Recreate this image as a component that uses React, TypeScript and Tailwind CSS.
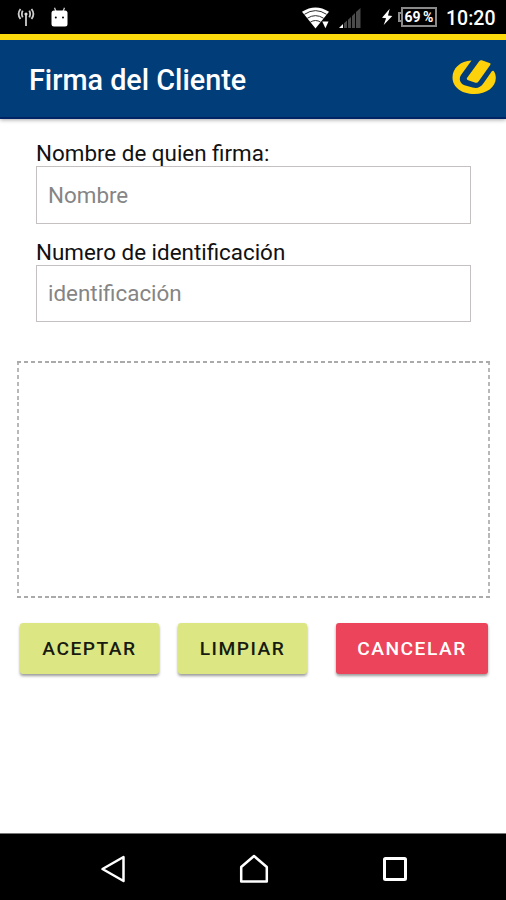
import type { ReactNode } from 'react';

function StatusBar() {
  return (
    <div className="flex h-[34px] shrink-0 items-center justify-between bg-black pl-[17px] pr-[11px] text-white">
      <div className="flex items-center gap-[16px] pb-px">
        <svg width="18" height="20" viewBox="0 0 18 20" fill="none" stroke="#ccc" strokeWidth="1.8">
          <path d="M9 8v11" />
          <circle cx="9" cy="7" r="1.6" fill="#ddd" stroke="none" />
          <path d="M5.7 3.7Q4 7 5.7 10.3M3.5 2Q-.3 7 3.5 12M12.3 3.7Q14 7 12.3 10.3M14.5 2Q18.3 7 14.5 12" />
        </svg>
        <svg width="17" height="20" viewBox="0 0 17 20">
          <path d="M3.5.8 5 4.5M13.5.8 12 4.5" stroke="#ccc" strokeWidth="1.3" />
          <rect x=".5" y="3.5" width="16" height="16" rx="2.5" fill="#fff" />
          <circle cx="4.8" cy="10.5" r="1" />
          <circle cx="12" cy="10.5" r="1" />
        </svg>
      </div>
      <div className="flex items-center">
        <svg width="27" height="24" viewBox="0 0 28 24" className="mt-[2px]">
          <path d="M0 5.5Q14-3.5 28 5.5L14 23Z" fill="#fff" />
          <path d="M2.5 8.2Q14 .5 25.5 8.2M5.5 12.3Q14 6.8 22.5 12.3M8.5 16.4Q14 12.8 19.5 16.4" fill="none" stroke="#222" strokeWidth="1" />
          <path d="M21 15.5h6.5L24.3 22.5Z" fill="#fff" />
        </svg>
        <svg width="22" height="21" viewBox="0 0 22 21" className="ml-[10px] mt-[3px]">
          <path d="M0 20 4 16v4Z" fill="#fff" />
          <path d="M5 15.3 8 12.6V20H5ZM9 11.7l3-2.8V20H9ZM13 8l3-2.9V20h-3ZM17 4.1 21.5 0v20H17Z" fill="#4b4b4b" />
        </svg>
        <svg width="12" height="18" viewBox="0 0 12 18" className="ml-[20px]">
          <path d="M8.7.8 1 9.8l4.1.4L2.7 17 11.3 8 7 7.4Z" fill="#fff" />
        </svg>
        <div className="ml-[5px] h-[10px] w-[3px] border-2 border-r-0 border-[#8a8a8a]" />
        <div className="flex h-[20px] w-[36px] items-center justify-center border-2 border-[#8a8a8a] text-[14px] font-bold leading-none [word-spacing:-1px]">69 %</div>
        <span className="ml-[9px] mt-[3px] w-[49px] whitespace-nowrap text-[19.5px] font-medium leading-none">10:20</span>
      </div>
    </div>
  );
}

function Logo() {
  return (
    <svg width="46" height="36" viewBox="0 0 46 36" fill="#fdd20b" className="relative -top-[2px] left-px">
      <path d="M20.5 1.5C9.500 2 1.500 9 1.500 18.500 1.500 28.500 11 35 23.300 35s21.500-7 21.500-16c0-2.800-.8-5.300-2.300-7.300L41 12 32.300 24.500c-2.800 4-6.300 5.300-10.800 4L13.500 26.200C9 24.500 7.500 20 10 16Z" />
      <path d="M30.8 1.3 38.500 3.900c1.100.4 1.300 1.100.7 2L27.500 22.600c-.9 1.200-1.700 1.500-3 1.100l-7.300-2.500c-1.500-.5-1.800-1.400-.9-2.600L28.200 2.200c.7-1 1.500-1.300 2.600-.9Z" />
    </svg>
  );
}

function Field({ label, placeholder }: { label: string, placeholder: string }) {
  return (
    <label className="block text-[22.4px] leading-[26px] text-[#111]">
      <span className="block">{label}</span>
      <input
        type="text"
        placeholder={placeholder}
        className="block h-[57.5px] w-full border border-[#c6c1c1] bg-white px-[11px] outline-none placeholder:text-[#858585]"
      />
    </label>
  );
}

function ActionButton({ className, children }: { className: string, children: ReactNode }) {
  return (
    <button className={`h-[51px] whitespace-nowrap rounded-[3px] pt-[2px] text-center text-[19.2px] font-medium tracking-[1.5px] shadow-[0_2px_3px_rgba(0,0,0,0.4)] ${className}`}>
      {children}
    </button>
  );
}

export default function App() {
  return (
    <div className="flex h-[900px] w-[506px] flex-col overflow-hidden bg-white font-[Roboto,sans-serif]">
      <StatusBar />
      <header className="flex h-[85px] shrink-0 items-center justify-between border-b-2 border-t-[6px] border-b-[#002465] border-t-[#fcd90d] bg-[#003d79] pl-[29px] pr-[10px] shadow-[0_1px_4px_rgba(0,0,0,0.35)]">
        <h1 className="pt-[3px] text-[28.8px] font-medium leading-none text-white">Firma del Cliente</h1>
        <Logo />
      </header>

      <main className="flex flex-1 flex-col pt-[21px]">
        <div className="flex flex-col gap-[15px] pl-[36px] pr-[35px]">
          <Field label="Nombre de quien firma:" placeholder="Nombre" />
          <Field label="Numero de identificación" placeholder="identificación" />
        </div>

        {/* signature pad */}
        <div className="ml-[17px] mt-[39px] h-[237px] w-[473px] bg-no-repeat [background-image:repeating-linear-gradient(90deg,#aaa_0_4px,transparent_4px_6.9px),repeating-linear-gradient(90deg,#aaa_0_4px,transparent_4px_6.9px),repeating-linear-gradient(180deg,#b8b8b8_0_4px,transparent_4px_6.9px),repeating-linear-gradient(180deg,#b8b8b8_0_4px,transparent_4px_6.9px)] [background-position:top,bottom,left,right] [background-size:100%_2px,100%_2px,2px_100%,2px_100%]" />

        <div className="mt-[25px] flex pl-[20px]">
          <ActionButton className="w-[139px] bg-[#dce784] text-[#171b10]">ACEPTAR</ActionButton>
          <ActionButton className="ml-[19px] w-[129px] bg-[#dce784] text-[#171b10]">LIMPIAR</ActionButton>
          <ActionButton className="ml-[29px] w-[152px] bg-[#ec445a] text-white">CANCELAR</ActionButton>
        </div>
      </main>

      <nav className="flex h-[67px] shrink-0 items-center justify-between border-t border-[#777] bg-black pl-[100px] pr-[98px] pt-[4px]">
        <svg width="26" height="28" viewBox="0 0 26 28" fill="none" stroke="#fff" strokeWidth="2.5" strokeLinejoin="round">
          <path d="M23.5 2v24L2.5 14Z" />
        </svg>
        <svg width="30" height="30" viewBox="0 0 30 30" fill="none" stroke="#fff" strokeWidth="2.5" strokeLinejoin="round">
          <path d="M2.2 13 15 2l12.8 11v14.5H2.2Z" />
        </svg>
        <svg width="26" height="26" viewBox="0 0 26 26" fill="none" stroke="#fff" strokeWidth="3">
          <rect x="2.5" y="2.5" width="21" height="21" rx="1" />
        </svg>
      </nav>
    </div>
  );
}
